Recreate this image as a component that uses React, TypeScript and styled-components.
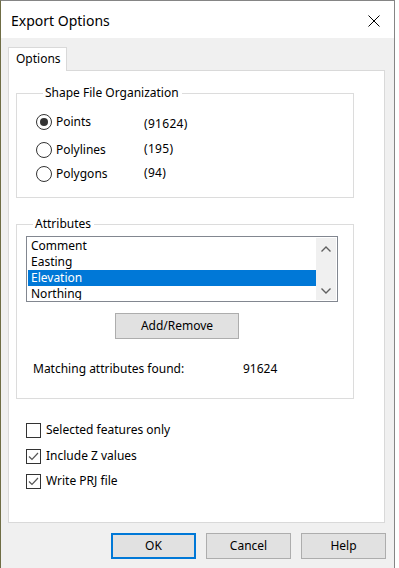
import React from "react";
import styled, { createGlobalStyle } from "styled-components";

const Global = createGlobalStyle`
  html, body { margin: 0; padding: 0; background: #ffffff; }
  body { font-family: "Noto Sans", "Open Sans", sans-serif; font-size: 12px; color: #000; }
  * { box-sizing: border-box; }
`;

const Window = styled.div`
  width: 395px;
  min-height: 568px;
  border: 1px solid #858585;
  border-left-color: #6f6d45;
  border-bottom: none;
  background: #f0f0f0;
  display: flex;
  flex-direction: column;
`;

const TitleBar = styled.div`
  height: 37px;
  background: #ffffff;
  display: flex;
  align-items: center;
  justify-content: space-between;
  padding: 0 14px 0 10px;
`;

const Title = styled.div`
  font-size: 14px;
  line-height: 20px;
  padding-top: 2px;
`;

const CloseButton = styled.div`
  width: 12px;
  height: 12px;
  display: flex;
  margin-top: 2px;
`;

const Body = styled.div`
  padding: 9px 9px 0 7px;
  display: flex;
  flex-direction: column;
`;

const TabStrip = styled.div`
  display: flex;
`;

const Tab = styled.div`
  position: relative;
  z-index: 1;
  width: 59px;
  height: 24px;
  margin-bottom: -1px;
  background: #ffffff;
  border: 1px solid #d9d9d9;
  border-bottom: none;
  padding: 3px 0 0 7px;
  line-height: 16px;
`;

const Panel = styled.div`
  height: 453px;
  background: #ffffff;
  border: 1px solid #d9d9d9;
  padding: 14px 0 0 7px;
  display: flex;
  flex-direction: column;
`;

const Group = styled.fieldset<{ $mt?: number; $pad: string }>`
  margin: ${(p) => p.$mt ?? 0}px 0 0 0;
  width: 338px;
  min-width: 0;
  border: 1px solid #dcdcdc;
  padding: ${(p) => p.$pad};
  display: flex;
  flex-direction: column;
`;

const Legend = styled.legend`
  margin-left: 7px;
  padding: 0 3px 0 2px;
  line-height: 16px;
  font-size: 12px;
`;

const RadioRow = styled.div<{ $mt: number }>`
  margin-top: ${(p) => p.$mt}px;
  height: 16px;
  display: grid;
  grid-template-columns: 16px 92px auto;
  align-items: center;
`;

const RadioCircle = styled.div<{ $checked?: boolean }>`
  width: 16px;
  height: 16px;
  border-radius: 50%;
  border: 1px solid #333333;
  display: flex;
  align-items: center;
  justify-content: center;
  &::after {
    content: "";
    width: 8px;
    height: 8px;
    border-radius: 50%;
    background: #333333;
    display: ${(p) => (p.$checked ? "block" : "none")};
  }
`;

const RadioLabel = styled.span`
  padding-left: 4px;
  line-height: 16px;
`;

const Count = styled.span<{ $dy: number }>`
  line-height: 16px;
  letter-spacing: 0.3px;
  transform: translateY(${(p) => p.$dy}px);
`;

const ListBox = styled.div`
  width: 312px;
  height: 66px;
  border: 1px solid #828790;
  padding: 1px;
  display: flex;
  background: #fff;
`;

const ListItems = styled.div`
  flex: 1;
  overflow: hidden;
  display: flex;
  flex-direction: column;
`;

const ListItem = styled.div<{ $selected?: boolean }>`
  height: 16px;
  flex-shrink: 0;
  line-height: 16px;
  padding-left: 3px;
  background: ${(p) => (p.$selected ? "#0078d7" : "transparent")};
  color: ${(p) => (p.$selected ? "#ffffff" : "#000000")};
`;

const ScrollBar = styled.div`
  width: 20px;
  background: #f0f0f0;
  display: flex;
  flex-direction: column;
  justify-content: space-between;
  align-items: center;
  padding: 8px 0 6px;
`;

const Button = styled.div<{ $default?: boolean; $w: number }>`
  width: ${(p) => p.$w}px;
  height: 26px;
  background: #e1e1e1;
  border: ${(p) => (p.$default ? "2px solid #0078d7" : "1px solid #adadad")};
  display: flex;
  align-items: center;
  justify-content: center;
  line-height: 16px;
`;

const AddRemoveWrap = styled.div`
  margin: 11px 0 0 89px;
  display: flex;
`;

const MatchRow = styled.div`
  margin: 22px 0 0 7px;
  display: grid;
  grid-template-columns: 210px auto;
  line-height: 16px;
`;

const CheckRow = styled.div<{ $mt: number }>`
  margin: ${(p) => p.$mt}px 0 0 10px;
  display: flex;
  align-items: center;
  height: 16px;
`;

const CheckBox = styled.div`
  width: 15px;
  height: 15px;
  border: 1px solid #333333;
  background: #ffffff;
  display: flex;
  align-items: center;
  justify-content: center;
`;

const CheckLabel = styled.span`
  padding-left: 5px;
  line-height: 16px;
`;

const ButtonRow = styled.div`
  margin: 10px -1px 0 0;
  display: flex;
  justify-content: flex-end;
  gap: 10px;
`;

const Chevron = ({ up }: { up?: boolean }) => (
  <svg width="10" height="6" viewBox="0 0 10 6">
    <path
      d={up ? "M0.5 5.5 L5 1 L9.5 5.5" : "M0.5 0.5 L5 5 L9.5 0.5"}
      fill="none"
      stroke="#606060"
      strokeWidth="1.4"
    />
  </svg>
);

const Check = () => (
  <svg width="13" height="13" viewBox="0 0 13 13">
    <path d="M2 6.5 L5 9.5 L11 3" fill="none" stroke="#555" strokeWidth="1.2" />
  </svg>
);

export default function App() {
  return (
    <>
      <Global />
      <Window>
        <TitleBar>
          <Title>Export Options</Title>
          <CloseButton>
            <svg width="12" height="12" viewBox="0 0 12 12">
              <path d="M0.5 0.5 L11.5 11.5 M11.5 0.5 L0.5 11.5" stroke="#000" strokeWidth="1" />
            </svg>
          </CloseButton>
        </TitleBar>
        <Body>
          <TabStrip>
            <Tab>Options</Tab>
          </TabStrip>
          <Panel>
            <Group $pad="13px 0 15px 19px">
              <Legend>Shape File Organization</Legend>
              <RadioRow $mt={0}>
                <RadioCircle $checked />
                <RadioLabel>Points</RadioLabel>
                <Count $dy={2}>(91624)</Count>
              </RadioRow>
              <RadioRow $mt={12}>
                <RadioCircle />
                <RadioLabel>Polylines</RadioLabel>
                <Count $dy={-1}>(195)</Count>
              </RadioRow>
              <RadioRow $mt={8}>
                <RadioCircle />
                <RadioLabel>Polygons</RadioLabel>
                <Count $dy={-1}>(94)</Count>
              </RadioRow>
            </Group>
            <Group $mt={18} $pad="4px 0 21px 9px">
              <Legend>Attributes</Legend>
              <ListBox>
                <ListItems>
                  <ListItem>Comment</ListItem>
                  <ListItem>Easting</ListItem>
                  <ListItem $selected>Elevation</ListItem>
                  <ListItem>Northing</ListItem>
                </ListItems>
                <ScrollBar>
                  <Chevron up />
                  <Chevron />
                </ScrollBar>
              </ListBox>
              <AddRemoveWrap>
                <Button $w={124}>Add/Remove</Button>
              </AddRemoveWrap>
              <MatchRow>
                <span>Matching attributes found:</span>
                <span>91624</span>
              </MatchRow>
            </Group>
            <CheckRow $mt={23}>
              <CheckBox />
              <CheckLabel>Selected features only</CheckLabel>
            </CheckRow>
            <CheckRow $mt={10}>
              <CheckBox>
                <Check />
              </CheckBox>
              <CheckLabel>Include Z values</CheckLabel>
            </CheckRow>
            <CheckRow $mt={9}>
              <CheckBox>
                <Check />
              </CheckBox>
              <CheckLabel>Write PRJ file</CheckLabel>
            </CheckRow>
          </Panel>
          <ButtonRow>
            <Button $default $w={85}>OK</Button>
            <Button $w={85}>Cancel</Button>
            <Button $w={85}>Help</Button>
          </ButtonRow>
        </Body>
      </Window>
    </>
  );
}
